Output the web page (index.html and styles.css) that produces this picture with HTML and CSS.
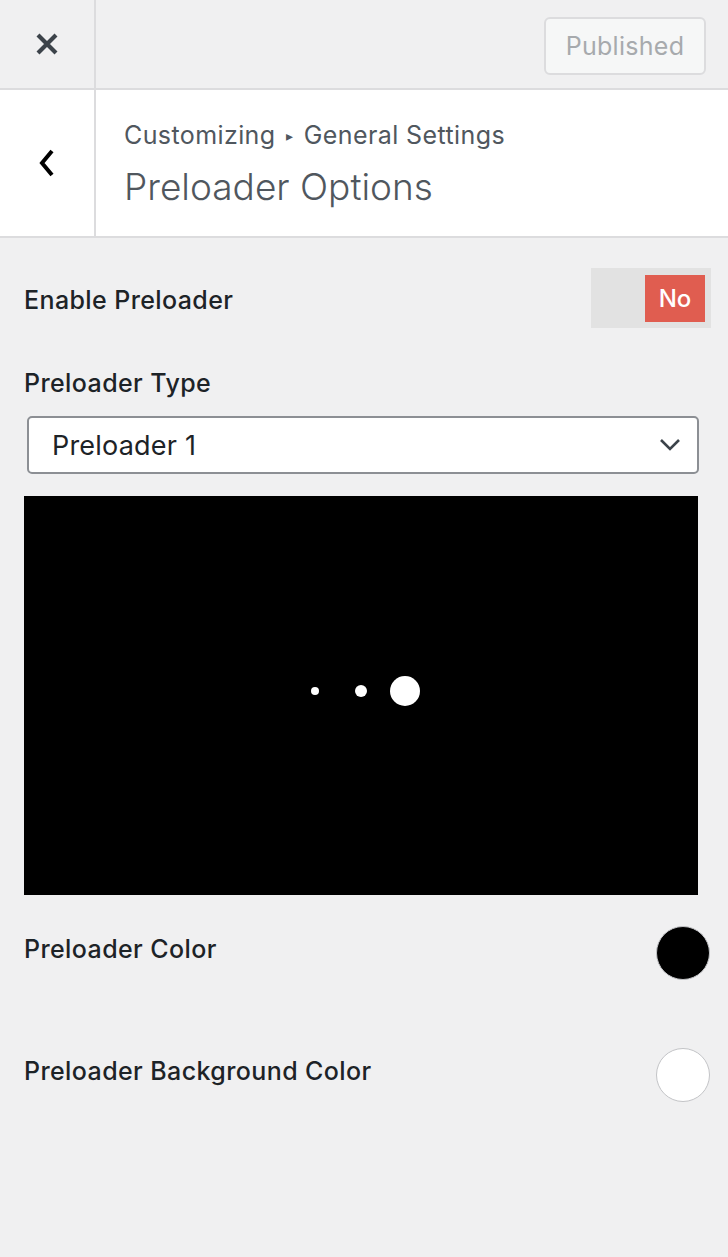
FILE: index.html
```html
<!DOCTYPE html>
<html lang="en">
<head>
    <meta charset="UTF-8">
    <meta name="viewport" content="width=device-width, initial-scale=1.0">
    <title>Preloader Options</title>
    <link rel="stylesheet" href="styles.css">
</head>
<body>
    <header class="topbar">
        <div class="close-col">
            <svg width="24" height="24" viewBox="0 0 24 24">
                <path d="M3 3L21 21M21 3L3 21" stroke="#3c434a" stroke-width="4.2" fill="none"/>
            </svg>
        </div>
        <div class="topbar-right">
            <button class="published">Published</button>
        </div>
    </header>

    <section class="section-head">
        <div class="back-col">
            <svg width="20" height="30" viewBox="0 0 20 30">
                <path d="M15 3L5 15L15 27" stroke="#000" stroke-width="4" fill="none"/>
            </svg>
        </div>
        <div class="titles">
            <div class="crumb">Customizing <span class="tri">&#9656;</span> General Settings</div>
            <h1>Preloader Options</h1>
        </div>
    </section>

    <main class="controls">
        <div class="row toggle-row">
            <label>Enable Preloader</label>
            <div class="toggle">
                <span class="toggle-no">No</span>
            </div>
        </div>

        <div class="field">
            <label>Preloader Type</label>
            <div class="select">
                <span>Preloader 1</span>
                <svg width="22" height="14" viewBox="0 0 22 14">
                    <path d="M2 2L11 11L20 2" stroke="#3c434a" stroke-width="2.6" fill="none"/>
                </svg>
            </div>
        </div>

        <div class="preview">
            <span class="dot dot-sm"></span>
            <span class="dot dot-md"></span>
            <span class="dot dot-lg"></span>
        </div>

        <div class="row color-row">
            <label>Preloader Color</label>
            <span class="swatch swatch-black"></span>
        </div>

        <div class="row color-row">
            <label>Preloader Background Color</label>
            <span class="swatch swatch-white"></span>
        </div>
    </main>
</body>
</html>
```

FILE: styles.css
```css
:root {
    --bg-color: #f0f0f1;
    --border: #dcdcde;
    --text-color: #1d2327;
    --muted: #50575e;
    --red: #e05d50;
}
body {
    font-family: Inter, Roboto, sans-serif;
    margin: 0;
    padding: 0;
    background: var(--bg-color);
    color: var(--text-color);
    width: 728px;
    min-height: 1257px;
}
.topbar {
    display: flex;
    height: 88px;
    border-bottom: 2px solid var(--border);
}
.close-col {
    width: 94px;
    border-right: 2px solid var(--border);
    display: flex;
    align-items: center;
    justify-content: center;
}
.topbar-right {
    flex: 1;
    display: flex;
    justify-content: flex-end;
    align-items: flex-start;
    padding: 17px 22px 0 0;
}
.published {
    width: 162px;
    height: 58px;
    background: #f6f7f7;
    border: 2px solid #dcdcde;
    border-radius: 6px;
    color: #a7aaad;
    font-family: inherit;
    font-size: 25px;
    letter-spacing: 0.3px;
}
.section-head {
    display: flex;
    height: 146px;
    background: #fff;
    border-bottom: 2px solid var(--border);
}
.back-col {
    width: 94px;
    border-right: 2px solid var(--border);
    display: flex;
    align-items: center;
    justify-content: center;
}
.titles {
    padding: 29px 0 0 28px;
    color: var(--muted);
}
.crumb {
    font-size: 25px;
    line-height: 32px;
    letter-spacing: 0.4px;
}
.tri {
    font-size: 14px;
    vertical-align: 3px;
    margin: 0 3px;
}
h1 {
    margin: 12px 0 0;
    font-size: 37px;
    font-weight: 300;
    line-height: 46px;
}
.controls {
    padding: 30px 17px 0 24px;
}
label {
    font-size: 25px;
    font-weight: 500;
    line-height: 30px;
    letter-spacing: 0.4px;
}
.row {
    display: flex;
    justify-content: space-between;
    align-items: center;
}
.toggle-row label {
    margin-top: 4px;
}
.toggle {
    width: 120px;
    height: 60px;
    background: #e2e2e2;
    display: flex;
    justify-content: flex-end;
    align-items: center;
    padding-right: 6px;
    box-sizing: border-box;
}
.toggle-no {
    width: 60px;
    height: 47px;
    background: var(--red);
    color: #fff;
    font-size: 24px;
    font-weight: 500;
    display: flex;
    align-items: center;
    justify-content: center;
}
.field {
    margin-top: 40px;
}
.select {
    margin: 18px 0 0 3px;
    width: 672px;
    height: 58px;
    box-sizing: border-box;
    border: 2px solid #8c8f94;
    border-radius: 5px;
    background: #fff;
    display: flex;
    justify-content: space-between;
    align-items: center;
    padding: 0 16px 0 23px;
    font-size: 27px;
    letter-spacing: 0.2px;
}
.preview {
    margin-top: 22px;
    width: 674px;
    height: 399px;
    box-sizing: border-box;
    padding-bottom: 10px;
    background: #000;
    display: flex;
    justify-content: center;
    align-items: center;
}
.dot {
    background: #fff;
    border-radius: 50%;
}
.dot-sm {
    width: 8px;
    height: 8px;
    margin-left: 9px;
    margin-right: 36px;
}
.dot-md {
    width: 12px;
    height: 12px;
    margin-right: 23px;
}
.dot-lg {
    width: 30px;
    height: 30px;
}
.color-row {
    margin-right: 1px;
}
.color-row label {
    margin-bottom: 8px;
}
.preview + .color-row {
    margin-top: 31px;
}
.color-row + .color-row {
    margin-top: 68px;
}
.swatch {
    width: 54px;
    height: 54px;
    border-radius: 50%;
    box-sizing: border-box;
    border: 1px solid #c3c4c7;
}
.swatch-black {
    background: #000;
}
.swatch-white {
    background: #fff;
}
```
